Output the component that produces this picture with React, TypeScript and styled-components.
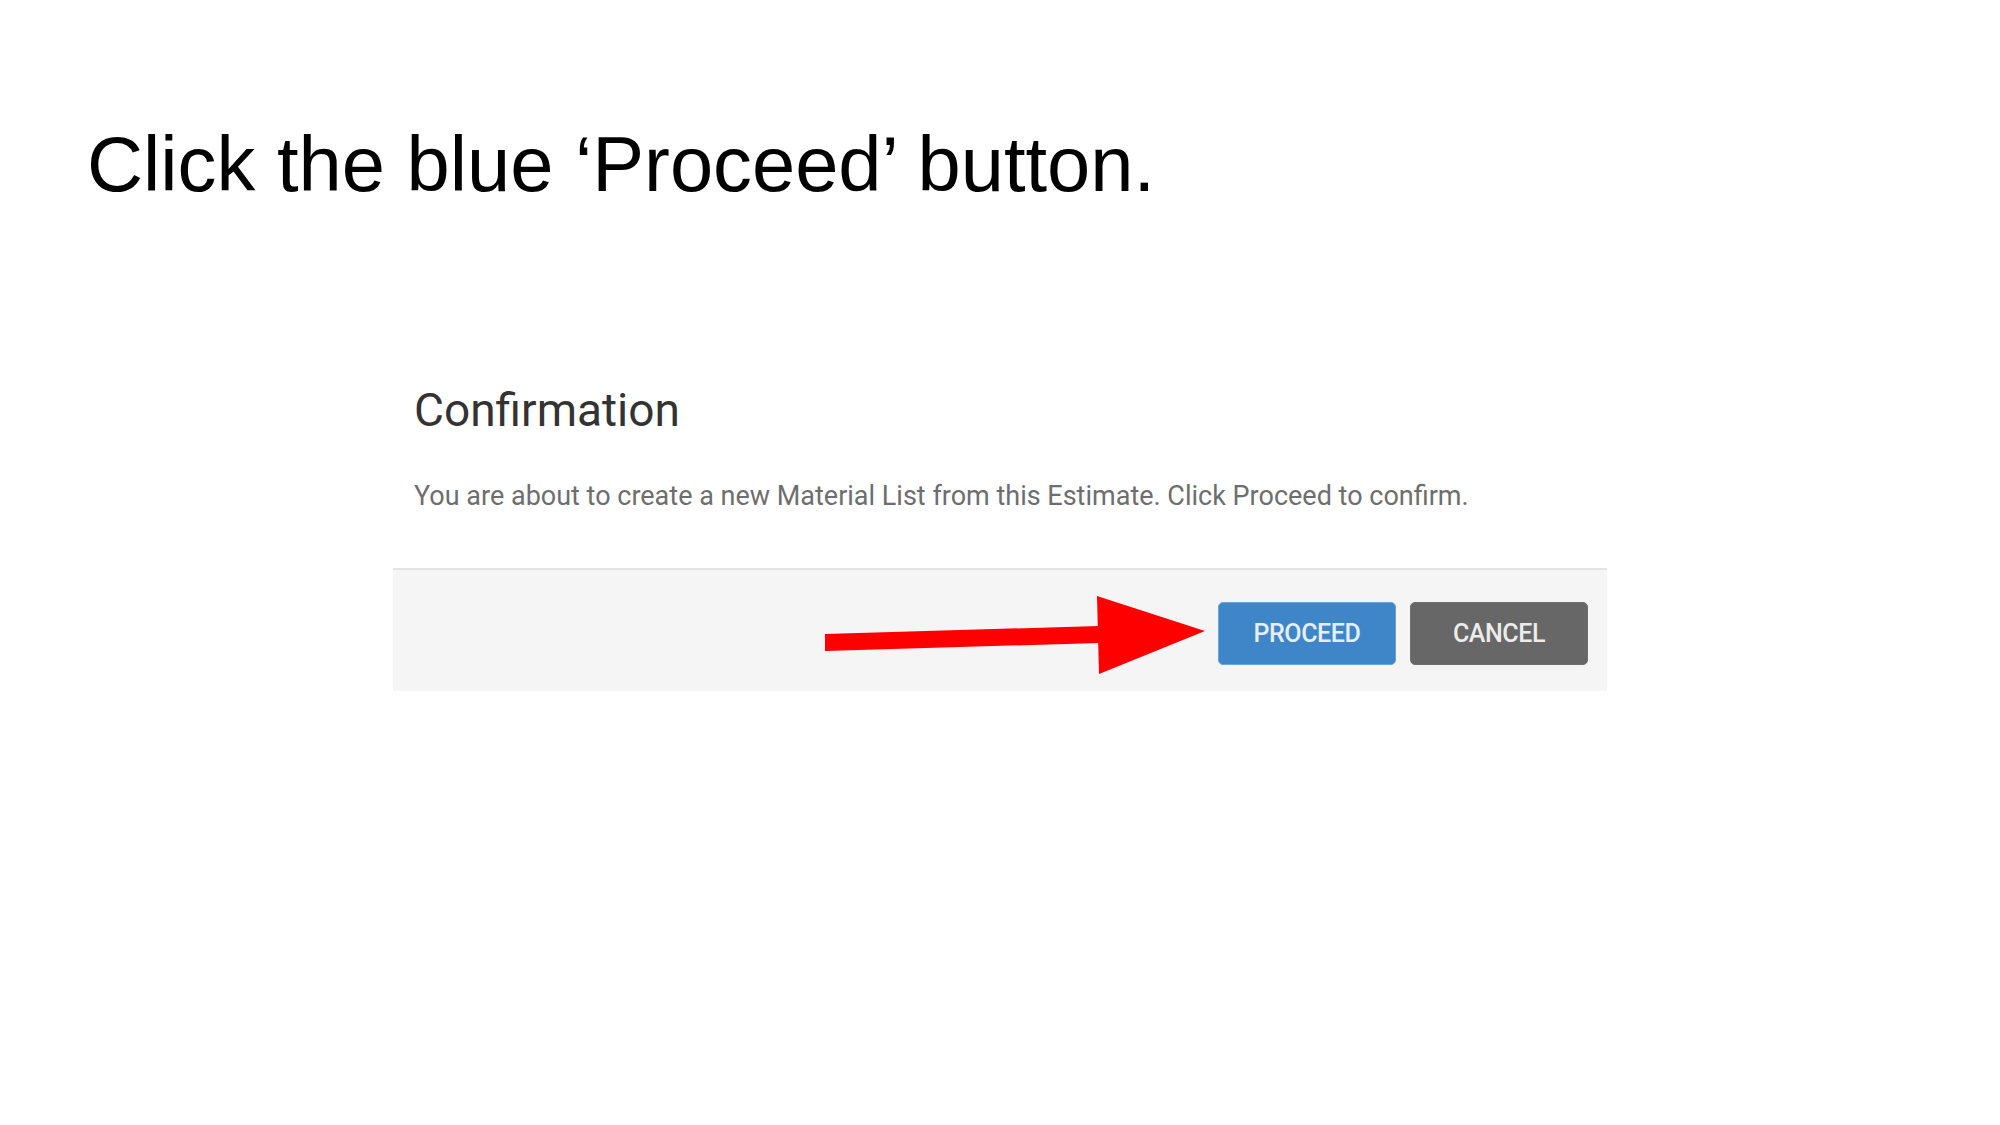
import React from 'react';
import styled, { createGlobalStyle } from 'styled-components';

const GlobalStyle = createGlobalStyle`
  html, body {
    margin: 0;
    padding: 0;
    background: #ffffff;
  }
  body {
    width: 2000px;
    height: 1125px;
    overflow: hidden;
  }
`;

const Slide = styled.div`
  display: flex;
  flex-direction: column;
  padding-top: 126px;
`;

const Title = styled.h1`
  margin: 0 0 0 87px;
  font-family: 'Liberation Sans', Arial, sans-serif;
  font-weight: 400;
  font-size: 77.7px;
  line-height: 1;
  color: #000;
`;

const Dialog = styled.div`
  display: flex;
  flex-direction: column;
  width: 1214px;
  margin: 183px 0 0 393px;
  font-family: Roboto, 'Noto Sans', sans-serif;
`;

const Body = styled.div`
  display: flex;
  flex-direction: column;
  gap: 50px;
  padding: 0 21px 58px;
`;

const Heading = styled.h2`
  margin: 0;
  font-size: 46px;
  font-weight: 400;
  line-height: 1;
  color: #333;
`;

const Message = styled.p`
  margin: 0;
  font-size: 27px;
  line-height: 1;
  color: #6e6e6e;
`;

const Footer = styled.div`
  position: relative;
  display: flex;
  justify-content: flex-end;
  gap: 14px;
  padding: 32px 19px 26px;
  background: #f5f5f5;
  border-top: 2px solid #e4e4e4;
`;

const Button = styled.button<{ $variant: 'primary' | 'secondary' }>`
  width: 178px;
  height: 63px;
  padding: 0;
  border-radius: 5px;
  border: 1px solid ${(p) => (p.$variant === 'primary' ? '#67a6dd' : '#6f6f6f')};
  background: ${(p) => (p.$variant === 'primary' ? '#3f86c9' : '#676767')};
  color: ${(p) => (p.$variant === 'primary' ? '#e4eff9' : '#ececec')};
  font-family: Roboto, 'Noto Sans', sans-serif;
  font-size: 25px;
  font-weight: 500;
  letter-spacing: -0.4px;
  cursor: pointer;
`;

const Arrow = styled.svg`
  position: absolute;
  left: 432px;
  top: 26px;
`;

export default function App() {
  return (
    <>
      <GlobalStyle />
      <Slide>
        <Title>Click the blue ‘Proceed’ button.</Title>
        <Dialog>
          <Body>
            <Heading>Confirmation</Heading>
            <Message>
              You are about to create a new Material List from this Estimate. Click Proceed to confirm.
            </Message>
          </Body>
          <Footer>
            <Arrow width="380" height="78" viewBox="0 0 380 78">
              <polygon points="0,38 274,30 274,47 0,55" fill="#ff0000" />
              <polygon points="272,0 380,35 274,78" fill="#ff0000" />
            </Arrow>
            <Button $variant="primary">PROCEED</Button>
            <Button $variant="secondary">CANCEL</Button>
          </Footer>
        </Dialog>
      </Slide>
    </>
  );
}
